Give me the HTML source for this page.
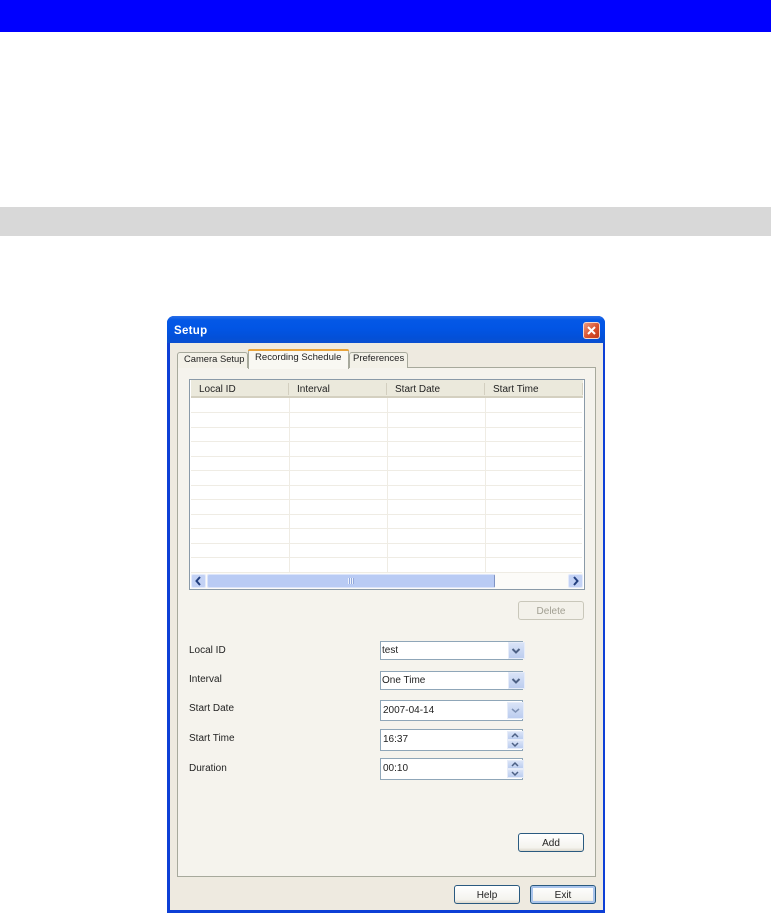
<!DOCTYPE html>
<html><head><meta charset="utf-8"><style>
html,body{margin:0;padding:0;background:#fff}
body{width:771px;height:913px;position:relative;overflow:hidden;font-family:"Liberation Sans",sans-serif;font-size:10px;color:#222}
div{position:absolute;box-sizing:border-box}
.t{white-space:nowrap;line-height:12px}
.hl{left:191px;width:391px;height:1px;background:#efece4}
.vl{top:398px;width:1px;height:175px;background:#efece4}
.sep{top:383px;width:1px;height:12px;background:#d3cfc0}
.f{left:380px;width:143px;background:#fff;border:1px solid #8fa6b8}
.dd{width:17px;background:linear-gradient(#d9e3f7,#bccdef);border:1px solid #e6ecf9}
.btn{border:1px solid #2a5a80;border-radius:3px;background:linear-gradient(#fff,#f4f3ee 80%,#dcd8cc);text-align:center;line-height:19px;color:#222}
</style></head><body>
<div style="left:0;top:0;width:771px;height:32px;background:#00f"></div>
<div style="left:0;top:207px;width:771px;height:29px;background:#d8d8d8"></div>

<div style="left:167px;top:316px;width:438px;height:597px;background:#0d3fd6;border-radius:7px 7px 0 0"></div>
<div style="left:167px;top:316px;width:438px;height:27px;border-radius:7px 7px 0 0;background:linear-gradient(#2a6fe8,#0458e6 15%,#0255e5 45%,#0350d8 80%,#0a4fd0)"></div>
<div class="t" style="left:174px;top:325px;color:#fff;font-weight:bold;font-size:11.5px;letter-spacing:.3px">Setup</div>
<div style="left:583px;top:322px;width:17px;height:17px;border-radius:3px;background:linear-gradient(135deg,#ec9b80,#d9502c 55%,#c0391a);border:1px solid #f4d8cc"></div>
<svg style="position:absolute;left:583px;top:322px" width="17" height="17"><path d="M5 5L12 12M12 5L5 12" stroke="#fff" stroke-width="2"/></svg>

<div style="left:170px;top:343px;width:433px;height:567px;background:#eeeae0"></div>

<div style="left:177px;top:367px;width:419px;height:510px;background:#f5f3ed;border:1px solid #a7a99c"></div>

<div style="left:177px;top:352px;width:71px;height:16px;background:#f3f1e8;border:1px solid #a7a99c;border-bottom:0;border-radius:3px 3px 0 0"></div>
<div class="t" style="left:184px;top:353px;font-size:9.4px">Camera Setup</div>
<div style="left:349px;top:352px;width:59px;height:16px;background:#f3f1e8;border:1px solid #a7a99c;border-bottom:0;border-radius:3px 3px 0 0"></div>
<div class="t" style="left:353px;top:353px;font-size:9.5px">Preferences</div>
<div style="left:248px;top:349px;width:101px;height:20px;background:#f9f8f3;border:1px solid #a7a99c;border-top:0;border-bottom:0;border-radius:3px 3px 0 0"></div>
<div style="left:248px;top:349px;width:101px;height:2px;background:#e8a33a;border-radius:3px 3px 0 0"></div>
<div class="t" style="left:255px;top:352px;font-size:9.6px">Recording Schedule</div>

<div style="left:189px;top:379px;width:396px;height:211px;background:#fff;border:1px solid #8a9aa8"></div>
<div style="left:191px;top:380px;width:392px;height:18px;background:#ebe9dc;border-bottom:2px solid #d4d0c0"></div>
<div class="sep" style="left:288px"></div><div class="sep" style="left:386px"></div><div class="sep" style="left:484px"></div><div class="sep" style="left:582px"></div>
<div class="t" style="left:199px;top:384px">Local ID</div>
<div class="t" style="left:297px;top:384px">Interval</div>
<div class="t" style="left:395px;top:384px">Start Date</div>
<div class="t" style="left:493px;top:384px">Start Time</div>
<div class="vl" style="left:289px"></div><div class="vl" style="left:387px"></div><div class="vl" style="left:485px"></div>
<div class="hl" style="top:412px"></div><div class="hl" style="top:427px"></div><div class="hl" style="top:441px"></div><div class="hl" style="top:456px"></div><div class="hl" style="top:470px"></div><div class="hl" style="top:485px"></div><div class="hl" style="top:499px"></div><div class="hl" style="top:514px"></div><div class="hl" style="top:528px"></div><div class="hl" style="top:543px"></div><div class="hl" style="top:557px"></div><div class="hl" style="top:572px"></div>

<div style="left:191px;top:573px;width:392px;height:16px;background:#fcfbf8"></div>
<div style="left:191px;top:574px;width:15px;height:14px;background:#c3d2f5;border:1px solid #e3eafb;border-radius:2px"></div>
<svg style="position:absolute;left:191px;top:574px" width="15" height="14"><path d="M9 3L5.5 7L9 11" fill="none" stroke="#24407f" stroke-width="2"/></svg>
<div style="left:207px;top:574px;width:288px;height:14px;background:#b9cbf4;border:1px solid #dbe4fa;border-right:1px solid #7f93c4;border-radius:2px"></div>
<div style="left:348px;top:578px;width:6px;height:6px;background:repeating-linear-gradient(90deg,#eef3fd 0 1px,#93a9dc 1px 2px)"></div>
<div style="left:568px;top:574px;width:15px;height:14px;background:#c3d2f5;border:1px solid #e3eafb;border-radius:2px"></div>
<svg style="position:absolute;left:568px;top:574px" width="15" height="14"><path d="M6 3L9.5 7L6 11" fill="none" stroke="#24407f" stroke-width="2"/></svg>

<div class="btn" style="left:518px;top:601px;width:66px;height:19px;border-color:#c9c7ba;color:#a19f92;background:#f3f1ea">Delete</div>

<div class="t" style="left:189px;top:645px">Local ID</div>
<div class="t" style="left:189px;top:674px">Interval</div>
<div class="t" style="left:189px;top:703px">Start Date</div>
<div class="t" style="left:189px;top:733px">Start Time</div>
<div class="t" style="left:189px;top:763px">Duration</div>

<div class="f" style="top:641px;height:19px"></div>
<div class="t" style="left:382px;top:645px">test</div>
<div class="dd" style="left:508px;top:642px;height:17px"></div>
<div class="f" style="top:671px;height:19px"></div>
<div class="t" style="left:382px;top:675px">One Time</div>
<div class="dd" style="left:508px;top:672px;height:17px"></div>
<div class="f" style="top:700px;height:21px"></div>
<div class="t" style="left:383px;top:705px">2007-04-14</div>
<div class="dd" style="left:507px;top:702px;height:17px"></div>
<svg style="position:absolute;left:508px;top:642px" width="16" height="80"><path d="M4.500 7L8 10.500L11.500 7M4.500 37L8 40.500L11.500 37" fill="none" stroke="#4d6185" stroke-width="2"/><path d="M4 67L7.500 70L11 67" fill="none" stroke="#7f92b5" stroke-width="1.500"/></svg>

<div class="f" style="top:729px;height:22px"></div>
<div class="t" style="left:383px;top:734px">16:37</div>
<div class="dd" style="left:507px;top:731px;height:9px"></div><div class="dd" style="left:507px;top:740px;height:9px"></div>
<div class="f" style="top:758px;height:22px"></div>
<div class="t" style="left:383px;top:763px">00:10</div>
<div class="dd" style="left:507px;top:760px;height:9px"></div><div class="dd" style="left:507px;top:769px;height:9px"></div>
<svg style="position:absolute;left:507px;top:731px" width="16" height="48"><path d="M5 6L8 3L11 6M5 12L8 15L11 12M5 35L8 32L11 35M5 41L8 44L11 41" fill="none" stroke="#4d6185" stroke-width="1.5"/></svg>

<div class="btn" style="left:518px;top:833px;width:66px;height:19px">Add</div>
<div class="btn" style="left:454px;top:885px;width:66px;height:19px">Help</div>
<div class="btn" style="left:530px;top:885px;width:66px;height:19px;box-shadow:inset 0 0 0 2px #a9c4ec">Exit</div>
</body></html>
